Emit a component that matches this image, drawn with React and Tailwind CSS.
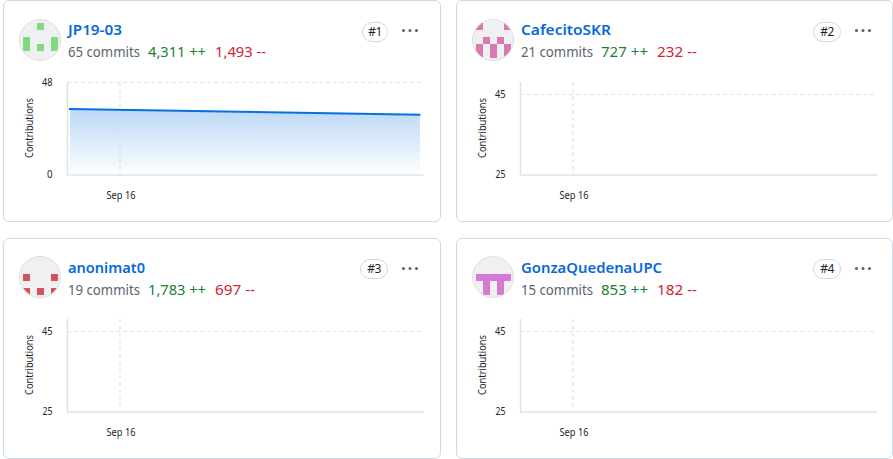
const UI = "font-['Noto_Sans','Open_Sans',sans-serif]";

const people = [
  {
    name: 'JP19-03', nameW: 54, rank: 1, commits: '65 commits', added: '4,311 ++', removed: '1,493 --',
    addW: 58, delW: 51, color: '#82d982', top: 48, topY: 82, bottom: 0, filled: true, shift: 0,
    cells: [[2, 0], [0, 2], [4, 2], [0, 3], [2, 3], [4, 3]],
  },
  {
    name: 'CafecitoSKR', nameW: 90, rank: 2, commits: '21 commits', added: '727 ++', removed: '232 --',
    addW: 47, delW: 40, color: '#d67ab1', top: 45, topY: 94, bottom: 25, shift: 0,
    cells: [[0, 0], [4, 0], [1, 2], [3, 2], [0, 3], [2, 3], [4, 3], [0, 4], [2, 4], [4, 4]],
  },
  {
    name: 'anonimat0', nameW: 77, rank: 3, commits: '19 commits', added: '1,783 ++', removed: '697 --',
    addW: 58, delW: 40, color: '#d25359', top: 45, topY: 94, bottom: 25, shift: 1,
    cells: [[0, 2], [4, 2], [0, 4], [2, 4], [4, 4]],
  },
  {
    name: 'GonzaQuedenaUPC', nameW: 141, rank: 4, commits: '15 commits', added: '853 ++', removed: '182 --',
    addW: 47, delW: 40, color: '#d67ad6', top: 45, topY: 94, bottom: 25, shift: 1,
    cells: [[0, 2], [1, 2], [2, 2], [3, 2], [4, 2], [1, 3], [3, 3], [1, 4], [3, 4]],
  },
];

function Label({ children, width, height = 20, y = 15, className }) {
  return (
    <svg width={width} height={height} className={`block shrink-0 overflow-visible ${className}`}>
      <text x="0" y={y} textLength={width} lengthAdjust="spacingAndGlyphs" fill="currentColor">{children}</text>
    </svg>
  );
}

function Avatar({ cells, color }) {
  return (
    <div className="size-[42px] shrink-0 overflow-hidden rounded-full border border-[#dddfe2] bg-[#f0f0f0]">
      <svg viewBox="1 1 40 40" className="size-full" shapeRendering="crispEdges">
        {cells.map(([c, r]) => (
          <rect key={`${c}-${r}`} x={4 + c * 7} y={4 + r * 7} width="7" height="7" fill={color} />
        ))}
      </svg>
    </div>
  );
}

function Chart({ p }) {
  return (
    <svg width="434" height="150" viewBox="4 70 434 150" className={`block text-[10px] ${UI}`} fill="#1f2328">
      <defs>
        <linearGradient id={`area-${p.rank}`} x1="0" y1="0" x2="0" y2="1">
          <stop offset="0" stopColor="#0570de" stopOpacity="0.27" />
          <stop offset="1" stopColor="#0570de" stopOpacity="0.01" />
        </linearGradient>
      </defs>
      {p.filled && <path d="M70 109L420 115V174H70Z" fill={`url(#area-${p.rank})`} />}
      <path d={`M67 ${p.topY + 0.5}H423.5`} stroke="#dfe3e8" strokeDasharray="4 3" />
      <path d="M120 82V174" stroke="#d1d9e0" strokeOpacity="0.45" strokeWidth="2" strokeDasharray="4 3" />
      <path d="M67.5 82V175H424" fill="none" stroke="#dfe3e8" strokeWidth="1.5" />
      {p.filled && <path d="M69 109L420.5 114.8" stroke="#0570de" strokeWidth="2" />}
      <text x="52.5" y={p.topY + 4.3} textAnchor="end" textLength="10.5" lengthAdjust="spacingAndGlyphs">{p.top}</text>
      <text x="52.5" y="178" textAnchor="end" textLength={p.bottom ? 10 : 5.5} lengthAdjust="spacingAndGlyphs">{p.bottom}</text>
      <text x="106.5" y="199" textLength="29" lengthAdjust="spacingAndGlyphs">Sep 16</text>
      <text transform="translate(33 158) rotate(-90)" textLength="60" lengthAdjust="spacingAndGlyphs">Contributions</text>
    </svg>
  );
}

function Card({ p }) {
  return (
    <section className="overflow-hidden rounded-md border border-[#d1d9e0] bg-white">
      <header className={`flex h-[69px] items-start pl-[15px] ${p.rank % 2 ? 'pr-4' : 'pr-[15px]'} ${p.shift ? 'pt-[17px]' : 'pt-[18px]'}`}>
        <Avatar cells={p.cells} color={p.color} />
        <div className={`ml-[7px] flex flex-col ${p.shift ? 'pt-0.5' : 'pt-px'}`}>
          <Label width={p.nameW} className={`text-[15px] font-semibold text-[#0969da] ${UI}`}>{p.name}</Label>
          <div className={`mt-0.5 flex text-[13.5px] ${UI}`}>
            <Label width={72} className="text-[#59636e]">{p.commits}</Label>
            <Label width={p.addW} className="ml-2 text-[#1a7f37]">{p.added}</Label>
            <Label width={p.delW} className="ml-[9px] text-[#d1242f]">{p.removed}</Label>
          </div>
        </div>
        <span className={`mt-[3px] ml-auto flex h-5 items-center justify-center rounded-full border border-[#d1d9e0] text-[12px] tracking-[-0.5px] text-[#1f2328] ${UI} ${p.rank === 1 ? 'w-[26px]' : 'w-7'}`}>
          #{p.rank}
        </span>
        <svg width="18" height="6" className={`mr-[5px] ml-[13px] shrink-0 ${p.shift ? 'mt-[9px]' : 'mt-2'}`} fill="#59636e">
          <circle cx="2.5" cy="3.5" r="1.5" />
          <circle cx="9" cy="3.5" r="1.5" />
          <circle cx="15.5" cy="3.5" r="1.5" />
        </svg>
      </header>
      <div className={p.shift ? '-mt-px' : ''}>
        <Chart p={p} />
      </div>
    </section>
  );
}

export default function App() {
  return (
    <main className="grid h-[459px] w-[893px] grid-cols-[438px_437px] grid-rows-[222px_221px] gap-x-[15px] gap-y-4 overflow-hidden bg-white pl-[3px]">
      {people.map((p) => <Card key={p.rank} p={p} />)}
    </main>
  );
}
